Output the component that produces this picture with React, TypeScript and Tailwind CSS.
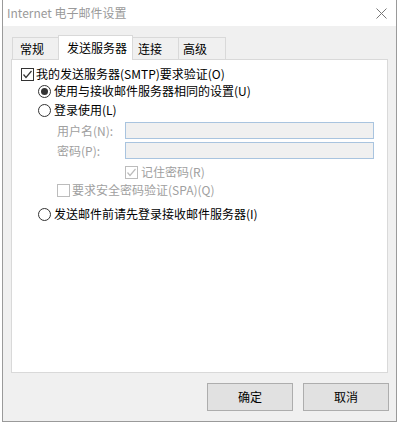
import type { ReactNode } from 'react';

const FONT = "font-['Noto_Sans_CJK_SC','Noto_Sans',sans-serif]";

function CheckBox({ checked, disabled }: { checked?: boolean; disabled?: boolean }) {
  const border = disabled ? 'border-[#bcbcbc]' : 'border-[#333333]';
  const stroke = disabled ? '#bcbcbc' : '#333333';
  return (
    <span className={`w-[13px] h-[13px] border ${border} bg-white flex items-center justify-center shrink-0`}>
      {checked && (
        <svg width="11" height="11" viewBox="0 0 11 11">
          <polyline points="1.5,5.5 4,8.5 9.5,2" fill="none" stroke={stroke} strokeWidth="1.2" />
        </svg>
      )}
    </span>
  );
}

function Radio({ checked }: { checked?: boolean }) {
  return (
    <span className="w-[13px] h-[13px] rounded-full border border-[#333333] bg-white flex items-center justify-center shrink-0">
      {checked && <span className="w-[7px] h-[7px] rounded-full bg-[#333333]" />}
    </span>
  );
}

function Row({ className, children }: { className: string; children: ReactNode }) {
  return <div className={`flex items-center h-[16px] whitespace-nowrap ${className}`}>{children}</div>;
}

export default function App() {
  return (
    <div className={`w-[399px] h-[424px] bg-white overflow-hidden text-[12px] leading-[16px] text-black ${FONT}`}>
      <div className="ml-[2px] w-[395px] h-[422px] border-x border-b border-[#9a9a9a] bg-[#f0f0f0] flex flex-col">
        {/* Title bar */}
        <div className="h-[26px] bg-white flex items-center justify-between pl-[4px] pr-[9px]">
          <span className="text-[#9a9a9a] text-[12px]">Internet 电子邮件设置</span>
          <svg width="11" height="11" viewBox="0 0 11 11">
            <path d="M0.5 0.5 L10.5 10.5 M10.5 0.5 L0.5 10.5" stroke="#777777" strokeWidth="1" />
          </svg>
        </div>

        {/* Tabs */}
        <div className="px-[8px] pt-[9px]">
          <div className="h-[24px] flex items-end pl-[1px]">
            <div className="w-[46px] h-[22px] border-t border-l border-[#d9d9d9] pl-[7px] flex items-center">常规</div>
            <div className="w-[75px] h-[25px] -mb-[1px] relative z-10 bg-white border-t border-x border-[#d9d9d9] pl-[8px] flex items-center">
              发送服务器
            </div>
            <div className="w-[45px] h-[22px] border-t border-[#d9d9d9] pl-[5px] flex items-center">连接</div>
            <div className="w-[48px] h-[22px] border-t border-x border-[#d9d9d9] pl-[4px] flex items-center">高级</div>
          </div>

          {/* Panel */}
          <div className="h-[314px] bg-white border border-[#d9d9d9] flex flex-col">
            <Row className="mt-[6px] pl-[9px] gap-[2px]">
              <CheckBox checked />
              <span>我的发送服务器(SMTP)要求验证(O)</span>
            </Row>
            <Row className="mt-[1px] pl-[26px] gap-[3px]">
              <Radio checked />
              <span>使用与接收邮件服务器相同的设置(U)</span>
            </Row>
            <Row className="mt-[3px] pl-[26px] gap-[3px]">
              <Radio />
              <span>登录使用(L)</span>
            </Row>
            <div className="mt-[4px] h-[17px] flex items-center pl-[45px] text-[#a0a0a0]">
              <span className="w-[68px]">用户名(N):</span>
              <div className="w-[249px] h-[17px] border border-[#a9c4df] bg-[#f0f0f0]" />
            </div>
            <div className="mt-[3px] h-[17px] flex items-center pl-[45px] text-[#a0a0a0]">
              <span className="w-[68px]">密码(P):</span>
              <div className="w-[249px] h-[17px] border border-[#a9c4df] bg-[#f0f0f0]" />
            </div>
            <Row className="mt-[5px] pl-[113px] gap-[3px] text-[#a0a0a0]">
              <CheckBox checked disabled />
              <span>记住密码(R)</span>
            </Row>
            <Row className="mt-[2px] pl-[45px] gap-[2px] text-[#a0a0a0]">
              <CheckBox disabled />
              <span>要求安全密码验证(SPA)(Q)</span>
            </Row>
            <Row className="mt-[8px] pl-[26px] gap-[3px]">
              <Radio />
              <span>发送邮件前请先登录接收邮件服务器(I)</span>
            </Row>
          </div>
        </div>

        {/* Buttons */}
        <div className="mt-[10px] flex justify-end gap-[10px] pr-[7px]">
          <button className="w-[86px] h-[28px] bg-[#e1e1e1] border border-[#adadad]">确定</button>
          <button className="w-[86px] h-[28px] bg-[#e1e1e1] border border-[#adadad]">取消</button>
        </div>
      </div>
    </div>
  );
}
